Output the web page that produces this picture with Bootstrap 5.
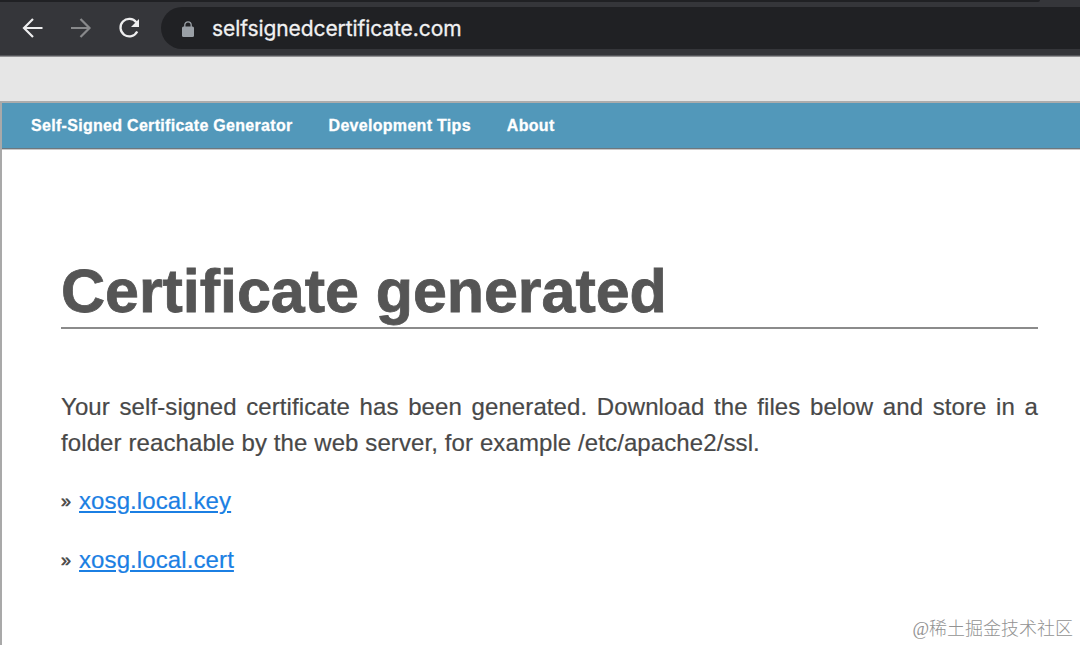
<!DOCTYPE html>
<html lang="en">
<head>
<meta charset="utf-8">
<meta name="viewport" content="width=device-width, initial-scale=1">
<title>Self-Signed Certificate Generator</title>
<link href="https://cdn.jsdelivr.net/npm/bootstrap@5.3.0/dist/css/bootstrap.min.css" rel="stylesheet">
<style>
  body { height: 645px; background: #fff; color: #484848; font: 24px/36px "Liberation Sans", Arial, sans-serif; }
  .browser-bar { height: 57px; background: #35363a; border-bottom: 1px solid #929294; box-shadow: inset 0 -1px #55565a; }
  .tab-edge { width: 1040px; height: 2px; background: #202124; border-bottom-right-radius: 2px; }
  .controls { height: 54px; padding: 5px 0 7px 21px; }
  .nav-icon { width: 24px; height: 24px; }
  .address { height: 42px; margin-left: 20px; padding-left: 19px; background: #202124; border-radius: 21px 0 0 21px; }
  .lock-icon { width: 16px; height: 18px; margin-top: 2px; }
  .host { margin-left: 16px; padding-top: 2px; color: #f1f1f2; font: 21px/28px Inter, sans-serif; letter-spacing: -.08px; -webkit-text-stroke: .3px; }
  .page-gap { height: 44px; background: #e6e6e6; }
  .site { height: 544px; border-left: 2px solid #a9a9a9; border-top: 2px solid #acacac; }
  .site-nav { position: relative; height: 46px; padding: 1px 0 0 29px; gap: 36px; background: #5298ba; border-bottom: 1px solid #6c777e; box-shadow: 0 1px #c8c8c8; }
  .site-nav a { color: #fff; font-size: 16px; font-weight: 700; line-height: 20px; letter-spacing: .3px; -webkit-text-stroke: .3px; }
  .content { padding: 110px 42px 0 59px; }
  h1 { height: 70px; margin: 0 0 60px; border-bottom: 2px solid #8b8b8b; color: #555; font-size: 61px; font-weight: 700; line-height: 65px; letter-spacing: -.05px; -webkit-text-stroke: .8px; }
  .intro { margin-bottom: 22px; text-align: justify; }
  .intro, .download a { letter-spacing: .1px; -webkit-text-stroke: .2px; }
  .download { margin-bottom: 23px; }
  .download a { margin-left: 7px; color: #1b7fe3; text-decoration-thickness: 2px; text-underline-offset: 2px; }
  .marker { width: 11px; font-size: 18px; -webkit-text-stroke: .6px; }
  .watermark { right: 7px; bottom: 3px; color: #929292; font: 300 18px/26px "Liberation Serif", "Noto Sans CJK SC", sans-serif; }
</style>
</head>
<body class="overflow-hidden position-relative">
<header class="browser-bar">
  <div class="tab-edge"></div>
  <div class="controls d-flex align-items-center">
    <svg class="nav-icon" viewBox="0 0 24 24" fill="none" stroke="#eeeeef" stroke-width="2.2"><path d="M21.5 12H3M12 3l-9 9 9 9"/></svg>
    <svg class="nav-icon ms-4" viewBox="0 0 24 24" fill="none" stroke="#88898b" stroke-width="2.2"><path d="M2 12h18.5M11.5 3l9 9-9 9"/></svg>
    <svg class="nav-icon ms-4" viewBox="0 0 24 24"><path d="M19.3 6.3A8.8 8.8 0 1 0 20.2 15.5" fill="none" stroke="#eeeeef" stroke-width="2.3"/><path d="M22 3v8h-8z" fill="#eeeeef"/></svg>
    <div class="address d-flex align-items-center flex-grow-1">
      <svg class="lock-icon" viewBox="0 0 16 18"><rect x="2" y="6.5" width="12" height="10.5" rx="1.5" fill="#9aa0a6"/><path d="M4.8 8V5a3.2 3.2 0 0 1 6.4 0v3" fill="none" stroke="#9aa0a6" stroke-width="1.3"/></svg>
      <span class="host">selfsignedcertificate.com</span>
    </div>
  </div>
</header>
<div class="page-gap"></div>
<div class="site">
  <nav class="site-nav d-flex align-items-center">
    <a class="text-decoration-none" href="#">Self-Signed Certificate Generator</a>
    <a class="text-decoration-none" href="#">Development Tips</a>
    <a class="text-decoration-none" href="#">About</a>
  </nav>
  <main class="content">
    <h1>Certificate generated</h1>
    <p class="intro">Your self-signed certificate has been generated. Download the files below and store in a folder reachable by the web server, for example /etc/apache2/ssl.</p>
    <p class="download d-flex"><span class="marker">»</span><a href="#">xosg.local.key</a></p>
    <p class="download d-flex"><span class="marker">»</span><a href="#">xosg.local.cert</a></p>
  </main>
</div>
<div class="watermark position-absolute">@稀土掘金技术社区</div>
<script src="https://cdn.jsdelivr.net/npm/bootstrap@5.3.0/dist/js/bootstrap.bundle.min.js"></script>
</body>
</html>
